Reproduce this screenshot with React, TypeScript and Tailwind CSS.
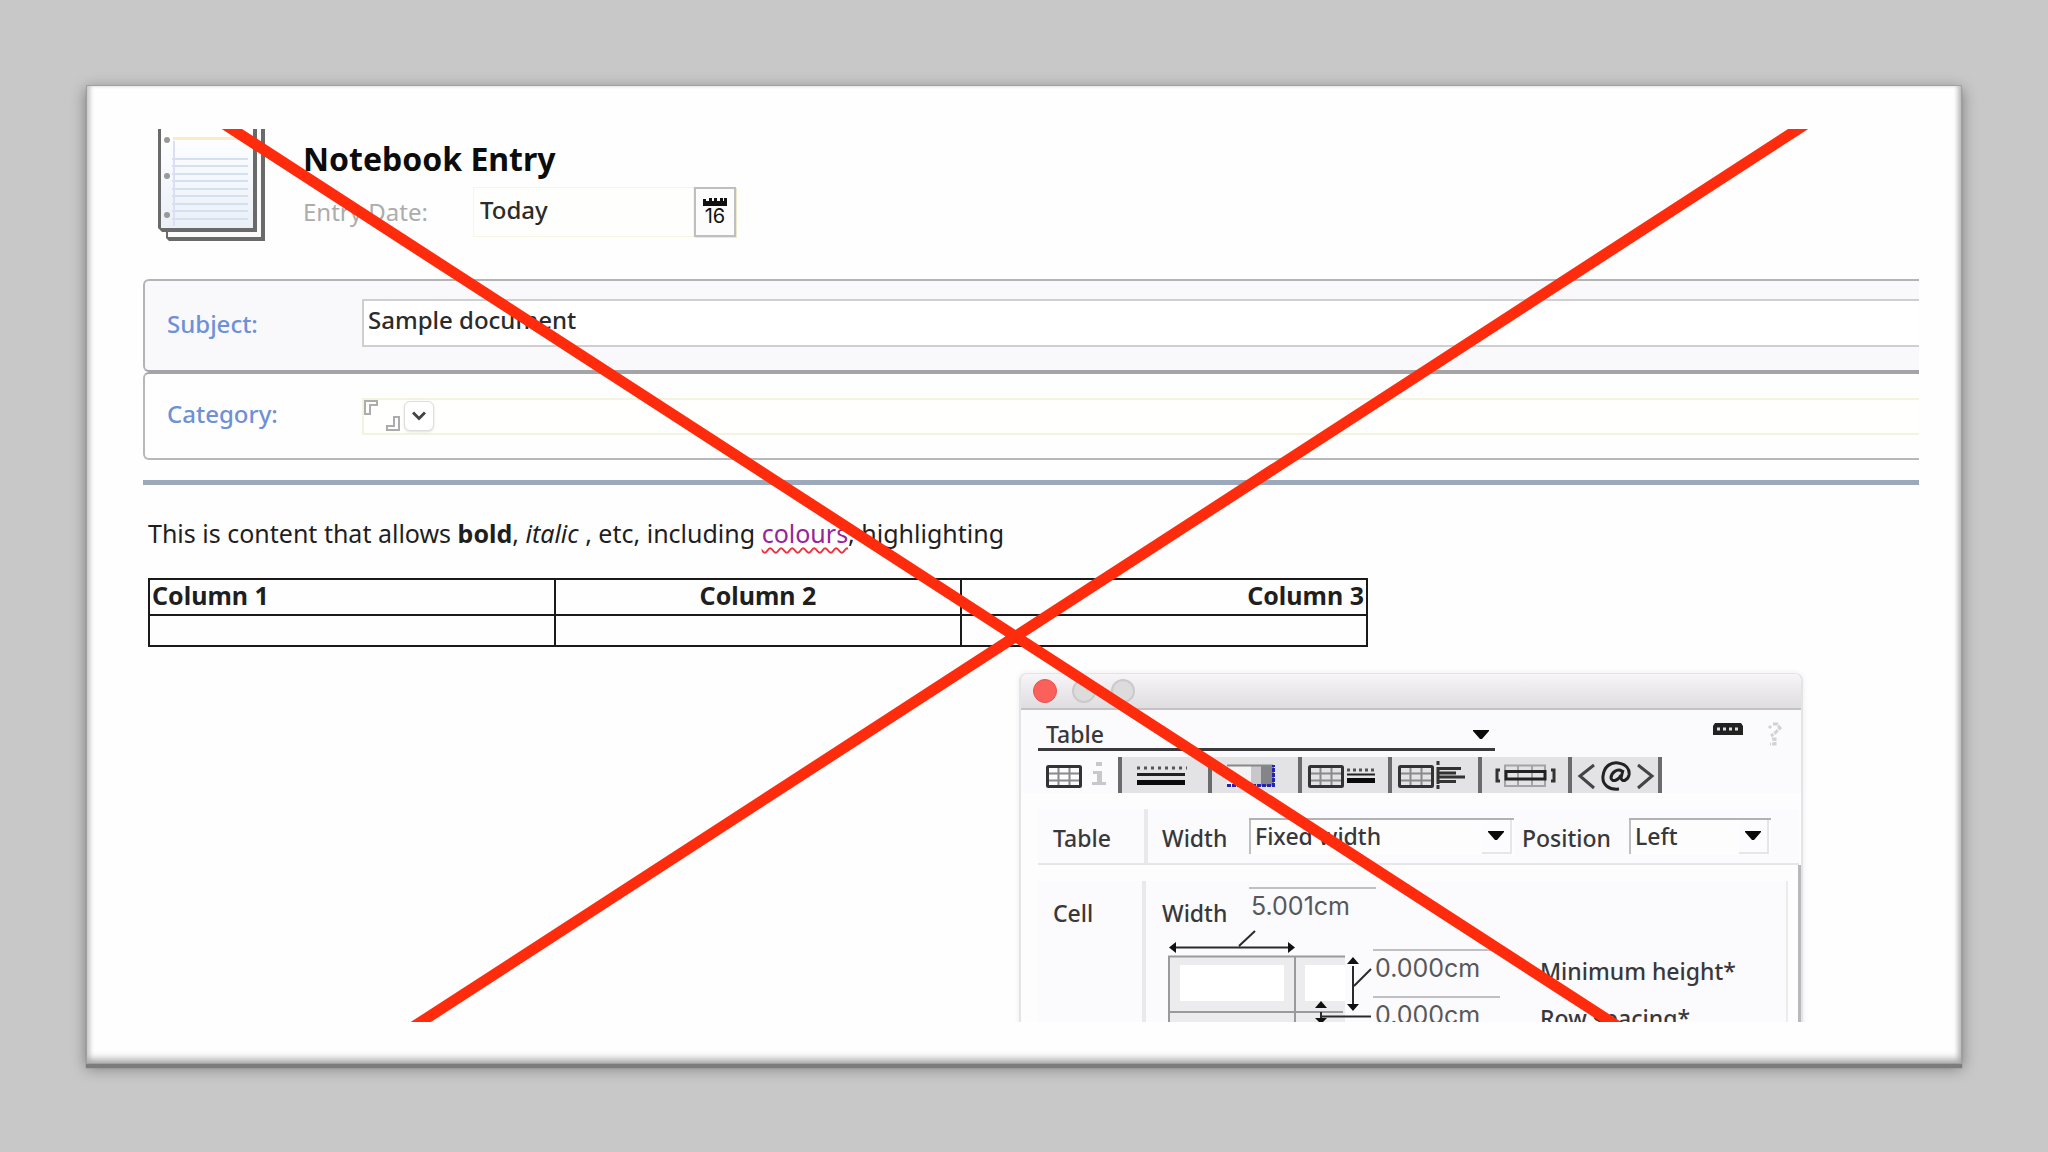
import type { ReactNode } from 'react';

// ==========================================
// Small shared drawings
// ==========================================
function Arrow() {
  return (
    <svg className="w-4 h-2.5" viewBox="0 0 16 10" aria-hidden="true">
      <path d="M0 0H16V1L9 9H7L0 1Z" fill="#0a0a0a" />
    </svg>
  );
}

function GridGlyph({ x = 0 }: { x?: number }) {
  return (
    <g transform={`translate(${x} 0)`} fill="none">
      <path d="M12.500 9V31M23.500 9V31M2 16.500H34M2 23.500H34" stroke="#8a8a8c" strokeWidth="2" />
      <rect x="1.500" y="9.500" width="33" height="20" rx="1" stroke="#333335" strokeWidth="3" />
    </g>
  );
}

function NotebookIcon() {
  return (
    <svg className="w-[110px] h-[116px] shrink-0" viewBox="0 0 110 116" aria-hidden="true">
      <defs>
        <linearGradient id="paper" x1="0" y1="0" x2="0" y2="1">
          <stop offset="0" stopColor="#ffffff" />
          <stop offset="1" stopColor="#eaf0f8" />
        </linearGradient>
      </defs>
      <path d="M8 0H107V112H11L8 109Z" fill="#6a6a6a" />
      <path d="M10 0H103V108H10Z" fill="#fafafa" />
      <path d="M0 0H99V103H4L0 99Z" fill="#6a6a6a" />
      <path d="M3 0H95V99H3Z" fill="url(#paper)" />
      <path d="M15 9.500H90" stroke="#fdebc8" strokeWidth="3" />
      <path d="M14 30H90M14 37H90M14 45H90M14 52H90M14 60H90M14 67H90M14 75H90M14 82H90M14 90H90" stroke="#d3e0f0" strokeWidth="2" />
      <path d="M16 12V97" stroke="#dcdff4" strokeWidth="2" />
      <circle cx="9" cy="11" r="3" fill="#999" />
      <circle cx="9" cy="47" r="3" fill="#999" />
      <circle cx="9" cy="86" r="3" fill="#999" />
    </svg>
  );
}

function CalendarTop() {
  return (
    <svg className="w-6 h-2" viewBox="0 0 24 8" aria-hidden="true">
      <path d="M0 1H3V3H6V0H9V3H11V0H14V3H17V0H20V3H21V0H24V8H0Z" fill="#111" />
    </svg>
  );
}

// ==========================================
// Document form
// ==========================================
function EntryHeader() {
  return (
    <header className="flex h-[150px] pl-[15px]">
      <NotebookIcon />
      <div className="ml-[35px] pt-2.5">
        <h1 className="text-[32px] leading-10 font-bold text-[#0c0c0c]">Notebook Entry</h1>
        <div className="mt-2 flex h-[50px] items-center">
          <label htmlFor="entry-date" className="w-[170px] text-[#acacac]">Entry Date:</label>
          <input
            id="entry-date"
            defaultValue="Today"
            className="h-[50px] w-[221px] border border-[#f8f5e0] bg-[#fefefd] pb-1.5 pl-1.5 font-medium"
          />
          <button
            type="button"
            aria-label="Pick a date"
            className="flex h-[50px] w-[42px] flex-col items-center justify-center border-2 border-[#bfbfc0] bg-[#fcfcfd] shadow-[1px_1px_0_#eee8c8]"
          >
            <CalendarTop />
            <span className="font-['Inter',sans-serif] text-[20px] leading-5 text-[#111]">16</span>
          </button>
        </div>
      </div>
    </header>
  );
}

function EntryFields() {
  return (
    <>
      <div className="flex h-[93px] items-center rounded-l-md border-y-2 border-l-2 border-[#b4b4b6] border-b-[#a4a4a6] bg-[#f9f9fb] pb-1.5 pl-[22px]">
        <label htmlFor="subject" className="w-[195px] shrink-0 pt-0.5 font-medium text-[#6d90d6]">Subject:</label>
        <input
          id="subject"
          defaultValue="Sample document"
          className="h-12 min-w-0 flex-1 border-y-2 border-l-2 border-[#cfcfd1] bg-white pb-1.5 pl-1 font-medium"
        />
      </div>
      <div className="flex h-[88px] items-center rounded-l-md border-y-2 border-l-2 border-[#b8b8ba] border-t-[#a4a4a6] bg-[#fefefe] pl-[22px]">
        <span className="w-[195px] shrink-0 pb-1 font-medium text-[#6d90d6]">Category:</span>
        <div className="flex h-[37px] flex-1 items-center border-y-2 border-l-2 border-[#f3f3df] bg-[#fffffd]">
          <svg className="w-10 h-8" viewBox="0 0 40 32" fill="#fff" stroke="#acacac" strokeWidth="2" aria-hidden="true">
            <path d="M1 14V1H13V5H6V14Z" />
            <path d="M35 17V30H23V26H30V17Z" />
          </svg>
          <button
            type="button"
            aria-label="Choose category"
            className="flex h-[30px] w-[30px] items-center justify-center rounded-md border border-[#dededc] bg-white shadow-sm"
          >
            <svg className="w-3.5 h-2.5" viewBox="0 0 14 10" fill="none" stroke="#444" strokeWidth="3" aria-hidden="true">
              <path d="M1 1.500L7 7.500L13 1.500" />
            </svg>
          </button>
        </div>
      </div>
      <hr className="mt-5 h-[5px] border-0 bg-[#9ca9bb]" />
    </>
  );
}

function EntryBody() {
  return (
    <div className="mt-8 pl-[5px] text-[25px] text-[#1f1f1f]">
      <p className="whitespace-nowrap">
        This is content that allows <b>bold</b>, <i>italic</i> , etc, including{' '}
        <span className="text-[#96259c] underline decoration-wavy decoration-[#f0303c] decoration-2 underline-offset-4">colours</span>
        , highlighting
      </p>
      <table className="mt-[29px] w-[1220px] table-fixed border-collapse border-2 border-[#1a1a1a]">
        <thead>
          <tr className="leading-[30px]">
            <th className="border-2 border-[#1a1a1a] pb-1 pl-0.5 text-left">Column 1</th>
            <th className="border-2 border-[#1a1a1a] pb-1 text-center">Column 2</th>
            <th className="border-2 border-[#1a1a1a] pr-0.5 pb-1 text-right">Column 3</th>
          </tr>
        </thead>
        <tbody>
          <tr className="h-[31px]">
            <td className="border-2 border-[#1a1a1a]"></td>
            <td className="border-2 border-[#1a1a1a]"></td>
            <td className="border-2 border-[#1a1a1a]"></td>
          </tr>
        </tbody>
      </table>
    </div>
  );
}

// ==========================================
// Table properties window
// ==========================================
function Tab({ label, children }: { label: string; children: ReactNode }) {
  return (
    <button type="button" aria-label={label} className="h-9 w-[90px] border-l-4 border-[#6b6b6d] bg-[#e3e2e4]">
      <svg className="w-[86px] h-9" viewBox="-3 0 86 36" aria-hidden="true">
        {children}
      </svg>
    </button>
  );
}

function PropertyTabs() {
  return (
    <div className="mt-1.5 flex pl-[17px]">
      <button type="button" aria-label="Table info" className="h-9 w-[80px]">
        <svg className="w-[80px] h-9" viewBox="-8 0 80 36" aria-hidden="true">
          <GridGlyph />
          <path d="M50 5H56V9H50ZM47 14H56V25H60V28H46V25H51V17H47Z" fill="#c8c7ca" />
        </svg>
      </button>
      <Tab label="Cell borders">
        <path d="M12 11H62" stroke="#555" strokeWidth="3" strokeDasharray="3 4" />
        <path d="M12 17.500H60" stroke="#222" strokeWidth="3" />
        <path d="M12 25.500H60" stroke="#0a0a0a" strokeWidth="5" />
      </Tab>
      <Tab label="Background">
        <rect x="12" y="8" width="48" height="21" fill="#f4f4f4" />
        <rect x="36" y="8" width="12" height="21" fill="#c8c8ca" />
        <rect x="46" y="8" width="13" height="21" fill="#858589" />
        <path d="M12 8.500H58" stroke="#888" strokeWidth="2" />
        <path d="M12 28.500H58.500V8" fill="none" stroke="#2323b4" strokeWidth="3" strokeDasharray="4 1" />
      </Tab>
      <Tab label="Table borders">
        <GridGlyph x={3} />
        <path d="M42 13H71" stroke="#555" strokeWidth="3" strokeDasharray="3 3" />
        <path d="M42 17.500H70" stroke="#222" strokeWidth="2" />
        <path d="M42 23.500H70" stroke="#0a0a0a" strokeWidth="5" />
      </Tab>
      <Tab label="Table margins">
        <GridGlyph x={3} />
        <path d="M43 4V8M43 28V32M43 10V27" stroke="#333" strokeWidth="3" />
        <path d="M43 11.500H66M43 16H61M43 20H70M43 24.500H61" stroke="#333" strokeWidth="3" />
      </Tab>
      <Tab label="Row layout">
        <path d="M15 13H12V24H15M66 13H69V24H66" fill="none" stroke="#333" strokeWidth="3" />
        <path d="M20 8.500H60V29H20ZM33 9V29M47 9V29" fill="none" stroke="#a4a4a6" strokeWidth="2" />
        <path d="M21 14.500H60V22H21Z" fill="none" stroke="#222" strokeWidth="3" />
      </Tab>
      <Tab label="HTML tags">
        <path d="M19 8L5 19L19 31M63 8L77 19L63 31" fill="none" stroke="#444" strokeWidth="3" />
        <path d="M44 32C34 33 27 28 28 19C29 10 35 5 43 6C51 7 55 12 54 18C53 23 47 26 46 21L48 13M46 18C44 23 37 26 36 21C36 16 42 11 47 14" fill="none" stroke="#222" strokeWidth="3" />
      </Tab>
      <span className="h-9 w-1 bg-[#6b6b6d]"></span>
    </div>
  );
}

function Picker({ id, value, width }: { id: string; value: string; width: string }) {
  return (
    <div className={`relative h-[37px] border-t-2 border-[#b2b1b4] bg-[#fdfdfe] ${width}`}>
      <select id={id} className="h-[34px] w-full appearance-none border-l-2 border-[#c0bfc2] pb-1 pl-1">
        <option>{value}</option>
      </select>
      <span className="pointer-events-none absolute top-0 right-0.5 flex h-[34px] w-[30px] items-center justify-center border-r-2 border-b-2 border-[#e6e5e8] bg-[#fcfbfd]">
        <Arrow />
      </span>
    </div>
  );
}

function CellDiagram() {
  return (
    <svg className="w-[209px] h-[110px] shrink-0" viewBox="0 0 209 110" aria-hidden="true">
      <path d="M5 28H181V110H5Z" fill="#ecebed" />
      <path d="M16 37H120V73H16ZM141 37H181V73H141Z" fill="#fff" />
      <path d="M5 110V28.500H181M131 28V110M5 84H179" fill="none" stroke="#9a999c" strokeWidth="2" />
      <path d="M12 19.500H124M75 18L91 3M189 38V76M190 58L207 41M157 84V90M158 88.500H207" fill="none" stroke="#2a2a2a" strokeWidth="2" />
      <path d="M5 19.500L12 14V25ZM131 19.500L124 14V25ZM189 29L183 36H195ZM189 83L183 76H195ZM157 73L151 80H163ZM151 90H163L157 96Z" fill="#111" />
    </svg>
  );
}

function Measure({ id, value }: { id: string; value: string }) {
  return (
    <input
      id={id}
      defaultValue={value}
      className="h-[47px] w-[127px] border-t-2 border-[#c0bfc2] bg-transparent pb-3 pl-0.5 font-['Inter',sans-serif] text-[25px] font-normal text-[#58585a]"
    />
  );
}

function TableWindow() {
  return (
    <section className="mt-[26px] ml-[876px] w-[784px] rounded-t-lg border-x-2 border-t border-[#e4e3e6] bg-[#fbfafc] text-[23px] font-medium text-[#38383a] shadow-[0_0_6px_rgba(0,0,0,0.08)]">
      <div className="flex h-[36px] items-center gap-[15px] rounded-t-lg border-b-2 border-[#c3c2c5] bg-linear-to-b from-[#f7f5f7] to-[#dfdde0] pl-3">
        <button type="button" aria-label="Close" className="size-6 rounded-full border border-[#e9504c] bg-[#fc605b]"></button>
        <button type="button" aria-label="Minimise" className="size-6 rounded-full border-2 border-[#cbcacb] bg-[#dddcdd]"></button>
        <button type="button" aria-label="Zoom" className="size-6 rounded-full border-2 border-[#cbcacb] bg-[#dddcdd]"></button>
      </div>

      <div className="flex h-[41px] items-start pl-[17px]">
        <div className="relative w-[457px]">
          <select aria-label="Properties for" className="h-[41px] w-full appearance-none border-b-3 border-[#3a3a3c] pt-2.5 pl-2 leading-7">
            <option>Table</option>
          </select>
          <span className="pointer-events-none absolute top-5 right-1.5 flex">
            <Arrow />
          </span>
        </div>
        <button type="button" aria-label="Collapse" className="mt-[13px] ml-[218px]">
          <svg className="w-[30px] h-3" viewBox="0 0 30 12" aria-hidden="true">
            <path d="M2 0H28L30 3V12H0V3Z" fill="#222" />
            <path d="M4 6H28" stroke="#ddd" strokeWidth="3" strokeDasharray="3 3" />
          </svg>
        </button>
        <button type="button" aria-label="Help" className="mt-3 ml-[25px]">
          <svg className="w-3.5 h-6" viewBox="0 0 14 24" fill="none" stroke="#d2d1d4" strokeWidth="3" aria-hidden="true">
            <path d="M1 6L3 4M5 2H9L12 6L7 11L3 14M4 17H7V22H2" strokeDasharray="5 1" />
          </svg>
        </button>
      </div>

      <PropertyTabs />

      {/* table width and position */}
      <div className="bg-[#fdfdfe] pt-4">
        <div className="mr-0.5 ml-[17px] flex h-[56px] items-center border-b-2 border-[#e6e5e8] bg-[#fbfafc]">
          <span className="w-[106px] pt-1 pl-[15px]">Table</span>
          <span className="h-full w-1 bg-[#e9e8eb]"></span>
          <label htmlFor="table-width" className="w-[101px] pt-1 pl-[14px]">Width</label>
          <Picker id="table-width" value="Fixed width" width="w-[265px]" />
          <label htmlFor="table-position" className="w-[115px] pt-1 pl-2">Position</label>
          <Picker id="table-position" value="Left" width="w-[142px]" />
        </div>
      </div>

      {/* cell sizes */}
      <div className="border-r-3 border-[#b9b8bb] bg-[#fdfdfe] pt-4">
        <div className="mr-[10px] ml-[17px] flex border-r-2 border-[#ecebee] bg-[#fbfafc]">
          <span className="w-[104px] pt-4 pl-[15px]">Cell</span>
          <span className="w-1 bg-[#e9e8eb]"></span>
          <div className="flex-1">
            <div className="flex h-[47px] items-start pt-1.5">
              <label htmlFor="cell-width" className="w-[103px] pt-2.5 pl-4">Width</label>
              <Measure id="cell-width" value="5.001cm" />
            </div>
            <div className="flex pl-[18px]">
              <CellDiagram />
              <div className="grid grid-cols-[127px_auto] content-start gap-x-10 pt-[21px]">
                <Measure id="min-height" value="0.000cm" />
                <label htmlFor="min-height" className="pt-1.5">Minimum height*</label>
                <Measure id="row-spacing" value="0.000cm" />
                <label htmlFor="row-spacing" className="pt-1.5">Row spacing*</label>
              </div>
            </div>
          </div>
        </div>
      </div>
    </section>
  );
}

function CrossOut() {
  return (
    <svg
      className="pointer-events-none absolute inset-0 size-full"
      viewBox="0 0 1776 893"
      preserveAspectRatio="none"
      stroke="#fe2b0c"
      strokeWidth="11"
      aria-hidden="true"
    >
      <path d="M58 -20L1499 913M1686 -20L247 913" />
    </svg>
  );
}

export default function App() {
  return (
    <div className="flex h-screen bg-[#c8c8c8] px-[86px] pt-[85px] pb-[88px] font-['Noto_Sans','Open_Sans',sans-serif] text-[24px] leading-8 text-[#2b2b2b]">
      <main className="flex min-w-0 flex-1 border border-[#a0a0a0] bg-[#fefefe] pt-[43px] pr-[42px] pb-[41px] pl-14 shadow-[0_4px_1px_#7c7b7d,0_4px_14px_rgba(0,0,0,0.4),inset_0_-7px_7px_-3px_#aaa,inset_5px_0_5px_-2px_#ccc,inset_-5px_0_5px_-2px_#bbb]">
        <div className="relative min-w-0 flex-1 overflow-hidden">
          <EntryHeader />
          <EntryFields />
          <EntryBody />
          <TableWindow />
          <CrossOut />
        </div>
      </main>
    </div>
  );
}
